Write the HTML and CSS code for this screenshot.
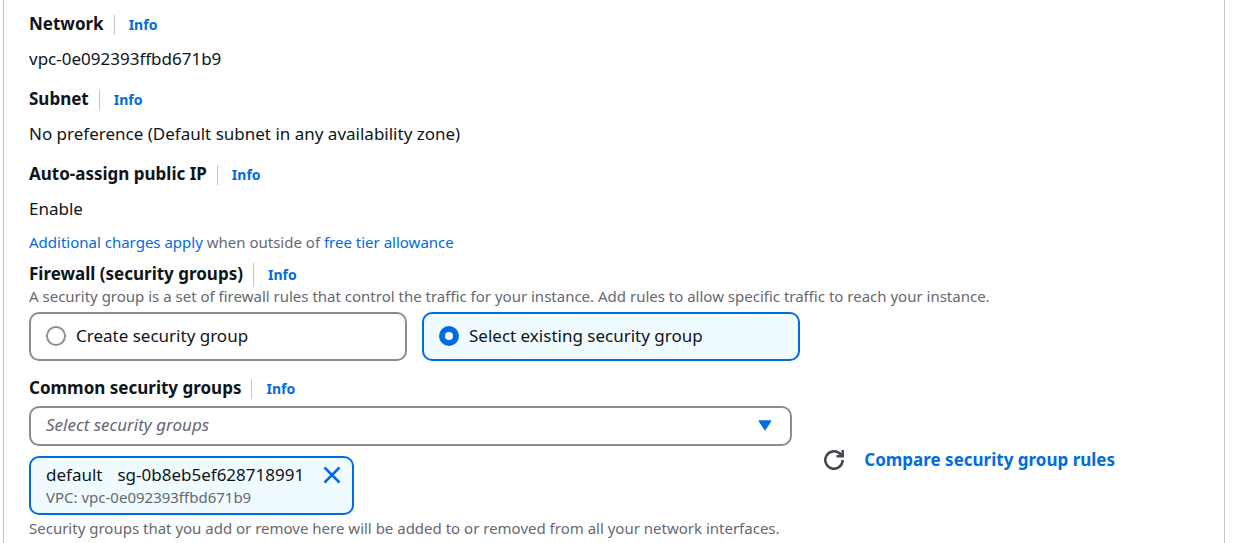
FILE: index.html
```html
<!DOCTYPE html>
<html lang="en">
<head>
<meta charset="utf-8">
<title>Network settings</title>
<link rel="stylesheet" href="styles.css">
</head>
<body>
<main class="panel">
  <section class="field">
    <h3 class="heading"><span>Network</span><a class="info" href="#">Info</a></h3>
    <p class="value">vpc-0e092393ffbd671b9</p>
  </section>
  <section class="field">
    <h3 class="heading"><span>Subnet</span><a class="info" href="#">Info</a></h3>
    <p class="value">No preference (Default subnet in any availability zone)</p>
  </section>
  <section class="field last">
    <h3 class="heading"><span>Auto-assign public IP</span><a class="info" href="#">Info</a></h3>
    <p class="value">Enable</p>
  </section>
  <p class="hint charges"><a href="#">Additional charges apply</a> when outside of <a href="#">free tier allowance</a></p>
  <section class="firewall">
    <h3 class="heading tall"><span>Firewall (security groups)</span><a class="info" href="#">Info</a></h3>
    <p class="hint">A security group is a set of firewall rules that control the traffic for your instance. Add rules to allow specific traffic to reach your instance.</p>
    <div class="tiles">
      <label class="tile"><input type="radio" name="group" class="radio"><span>Create security group</span></label>
      <label class="tile"><input type="radio" name="group" class="radio" checked><span>Select existing security group</span></label>
    </div>
  </section>
  <section class="common">
    <div class="picker">
      <h3 class="heading"><label for="groups">Common security groups</label><a class="info" href="#">Info</a></h3>
      <div class="select-wrap">
        <select id="groups" class="select"><option>Select security groups</option></select>
        <svg class="caret" viewBox="0 0 14 11" aria-hidden="true"><path d="M1.500 1h11L7 9.500z" fill="currentColor" stroke="currentColor" stroke-width="1.500" stroke-linejoin="round"/></svg>
      </div>
      <div class="token">
        <div>
          <p class="token-name"><span>default</span><span>sg-0b8eb5ef628718991</span></p>
          <p class="hint">VPC: vpc-0e092393ffbd671b9</p>
        </div>
        <button class="icon-button dismiss" type="button" aria-label="Remove default"><svg viewBox="0 0 18 18" aria-hidden="true"><path d="M1.500 1.500l15 15M16.500 1.500l-15 15" fill="none" stroke="currentColor" stroke-width="2.500"/></svg></button>
      </div>
      <p class="hint note">Security groups that you add or remove here will be added to or removed from all your network interfaces.</p>
    </div>
    <div class="actions">
      <button class="icon-button refresh" type="button" aria-label="Refresh"><svg viewBox="0 0 20 20" aria-hidden="true"><path d="M18.700 10A8.700 8.700 0 1 1 15.500 3.300L18.200 6M18.700 0V6.300H12.500" fill="none" stroke="currentColor" stroke-width="2.500"/></svg></button>
      <a class="compare" href="#">Compare security group rules</a>
    </div>
  </section>
</main>
</body>
</html>
```
FILE: styles.css
```css
* { box-sizing: border-box; }
body {
  margin: 0 16px 0 3px;
  background: #fff;
  color: #0f141a;
  font: 17px/24px "Noto Sans", "Open Sans", sans-serif;
}
h3, p { margin: 0; }
a { color: #006ce0; text-decoration: none; }
.panel {
  min-height: 100vh;
  padding: 12px 31px 4px 25px;
  border: solid #c6c6cd;
  border-width: 0 1px;
}
.field { padding-bottom: 16px; }
.last { padding-bottom: 11px; }
.heading {
  display: flex;
  align-items: center;
  height: 24px;
  font-size: 17px;
  font-weight: 700;
}
.info {
  margin: 2px 0 0 10px;
  padding-left: 14px;
  border-left: 1px solid #c6c6cd;
  font-size: 14px;
  line-height: 20px;
}
.tall .info { line-height: 24px; }
.value { margin-top: 11px; }
.hint {
  color: #656871;
  font-size: 15px;
  line-height: 20px;
}
.charges { margin-bottom: 10px; }
.tiles {
  display: grid;
  grid-template-columns: repeat(3, 1fr);
  gap: 15px;
  margin-top: 6px;
}
.tile {
  display: flex;
  align-items: center;
  gap: 10px;
  padding: 10px 15px 11px;
  border: 2px solid #8c8c94;
  border-radius: 10px;
  min-height: 49px;
}
.tile:has(:checked) { border-color: #006ce0; background: #f0fbff; }
.radio {
  appearance: none;
  width: 20px;
  height: 20px;
  margin: 0;
  border: 2px solid #8c8c94;
  border-radius: 50%;
  background: #fff;
}
.radio:checked { border: 6px solid #006ce0; }
.common { display: flex; margin-top: 15px; }
.picker { flex: 0 0 66%; }
.select-wrap {
  display: flex;
  position: relative;
  margin: 6px 5px 10px 0;
}
.select {
  appearance: none;
  width: 100%;
  height: 40px;
  padding: 0 15px 2px;
  border: 2px solid #8c8c94;
  border-radius: 10px;
  background: #fff;
  color: #656871;
  font: italic 17px/24px "Noto Sans", "Open Sans", sans-serif;
}
.caret {
  position: absolute;
  right: 20px;
  top: 14px;
  width: 14px;
  height: 11px;
  color: #006ce0;
  pointer-events: none;
}
.token {
  display: flex;
  width: fit-content;
  align-items: flex-start;
  gap: 19px;
  padding: 5px 11px 6px 15px;
  border: 2px solid #006ce0;
  border-radius: 10px;
  background: #f0fbff;
}
.token-name { display: flex; gap: 15px; }
.icon-button {
  display: flex;
  padding: 0;
  border: 0;
  background: none;
}
.dismiss { margin-top: 3px; color: #006ce0; }
.dismiss svg { width: 18px; height: 18px; }
.note { margin-top: 3px; white-space: nowrap; }
.actions {
  display: flex;
  align-items: center;
  gap: 20px;
  padding-left: 27px;
  padding-top: 6px;
}
.refresh { color: #424650; }
.refresh svg { width: 20px; height: 20px; }
.compare { font-weight: 700; white-space: nowrap; }
```
